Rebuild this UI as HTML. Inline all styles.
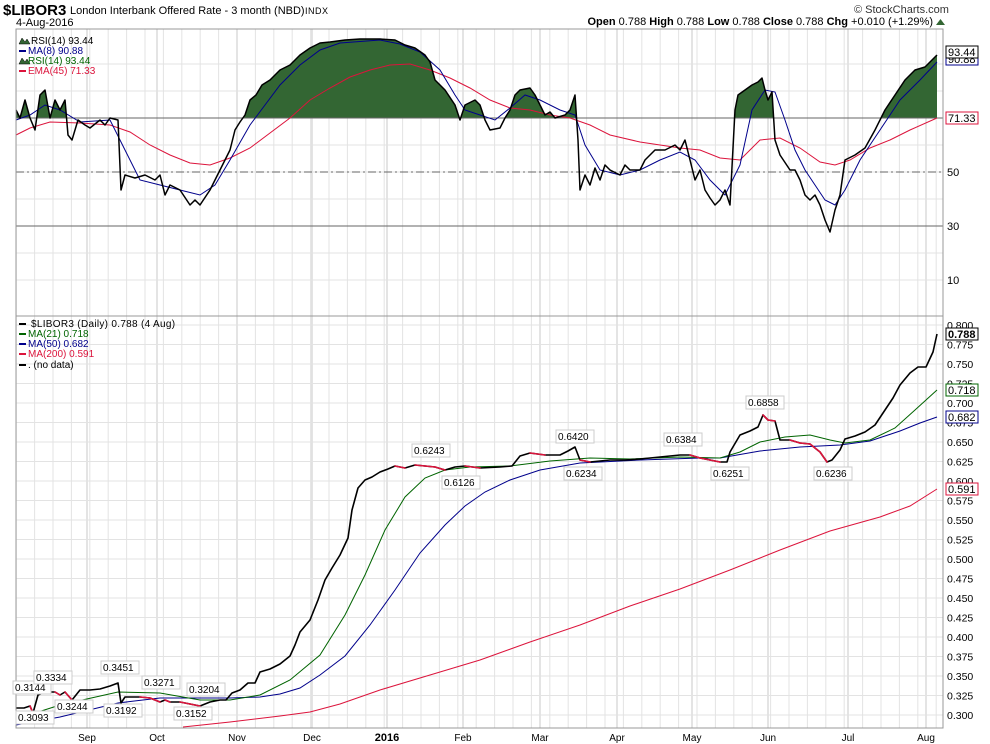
<!DOCTYPE html>
<html><head><meta charset="utf-8"><style>
html,body{margin:0;padding:0;background:#fff;width:990px;height:744px;overflow:hidden}
svg{display:block;font-family:"Liberation Sans",sans-serif}
.ax{font-size:11px;fill:#000}
</style></head><body>
<svg id="s" width="990" height="744" viewBox="0 0 990 744" xmlns="http://www.w3.org/2000/svg">
<defs>
<clipPath id="above"><rect x="16" y="29" width="927" height="89"/></clipPath>
<clipPath id="p2"><rect x="16" y="316" width="927" height="412"/></clipPath>
</defs>
<g id="grid"></g>
<text x="3" y="15" style="font-size:15px;font-weight:bold">$LIBOR3</text>
<text x="70" y="14" style="font-size:11px">London Interbank Offered Rate - 3 month (NBD)</text>
<text x="305" y="14" style="font-size:9px;letter-spacing:0.5px">INDX</text>
<text x="16" y="26" style="font-size:11px">4-Aug-2016</text>
<text x="854" y="13" style="font-size:11px;fill:#333">© StockCharts.com</text>
<text x="933" y="25" text-anchor="end" style="font-size:11px"><tspan font-weight="bold">Open</tspan> 0.788  <tspan font-weight="bold">High</tspan> 0.788  <tspan font-weight="bold">Low</tspan> 0.788  <tspan font-weight="bold">Close</tspan> 0.788  <tspan font-weight="bold">Chg</tspan> +0.010 (+1.29%)</text>
<polygon points="936,25 945,25 940.5,19" fill="#336633"/>
<g id="rsi"></g>
<g id="price"></g>
<rect x="16" y="29" width="927" height="699" fill="none" stroke="#999"/>
<line x1="16" y1="316" x2="943" y2="316" stroke="#999"/>
<g font-size="10">
<polygon points="19,44 22,38 25,42 27,39 30,44" fill="#336633" stroke="#000" stroke-width=".5"/>
<text x="31" y="44" fill="#000">RSI(14) 93.44</text>
<rect x="19" y="50" width="7" height="2" fill="#00008b"/><text x="28" y="54" fill="#00008b">MA(8) 90.88</text>
<polygon points="19,64 22,58 25,62 27,59 30,64" fill="#336633" stroke="#000" stroke-width=".5"/>
<text x="28" y="64" fill="#006400">RSI(14) 93.44</text>
<rect x="19" y="70" width="7" height="2" fill="#dc143c"/><text x="28" y="74" fill="#dc143c">EMA(45) 71.33</text>
<rect x="19" y="323" width="7" height="2" fill="#000"/><text x="31" y="327" fill="#000" style="letter-spacing:.3px">$LIBOR3 (Daily) 0.788 (4 Aug)</text>
<rect x="19" y="333" width="7" height="2" fill="#006400"/><text x="28" y="337" fill="#006400">MA(21) 0.718</text>
<rect x="19" y="343" width="7" height="2" fill="#00008b"/><text x="28" y="347" fill="#00008b">MA(50) 0.682</text>
<rect x="19" y="353" width="7" height="2" fill="#dc143c"/><text x="28" y="357" fill="#dc143c">MA(200) 0.591</text>
<rect x="19" y="364" width="7" height="2" fill="#000"/><text x="28" y="368" fill="#000">. (no data)</text>
</g>
<g id="axis"></g>
</svg>
<script>
const NS="http://www.w3.org/2000/svg";
function el(p,t,a,txt){const e=document.createElementNS(NS,t);for(const k in a)e.setAttribute(k,a[k]);if(txt!==undefined)e.textContent=txt;p.appendChild(e);return e;}
const G=document.getElementById('grid'),A=document.getElementById('axis'),R=document.getElementById('rsi'),P=document.getElementById('price');
const months=[[87,'Sep'],[157,'Oct'],[237,'Nov'],[312,'Dec'],[387,'2016'],[463,'Feb'],[540,'Mar'],[617,'Apr'],[692,'May'],[768,'Jun'],[848,'Jul'],[926,'Aug']];
for(let x=237-18.4*12;x<943;x+=18.4){if(x>16)el(G,'line',{x1:x,y1:29,x2:x,y2:728,stroke:'#e3e3e3'});}
months.forEach(([x,t])=>{el(G,'line',{x1:x,y1:29,x2:x,y2:728,stroke:'#c8c8c8'});
 el(A,'text',{x:x,y:741,'text-anchor':'middle','font-size':t=='2016'?'11':'10','font-weight':t=='2016'?'bold':'normal'},t);});
const ry=r=>118+(70-r)*2.7;
for(let r=10;r<=90;r+=10){el(G,'line',{x1:16,y1:ry(r),x2:943,y2:ry(r),stroke:'#e3e3e3'});}
[10,30,50].forEach(r=>el(A,'text',{x:947,y:ry(r)+4,'font-size':'11'},r));
const py=v=>325+(0.8-v)*780;
for(let i=0;i<=20;i++){const v=0.3+i*0.025,y=py(v);el(G,'line',{x1:16,y1:y,x2:943,y2:y,stroke:'#e3e3e3'});el(A,'text',{x:947,y:y+4,'font-size':'10.5'},v.toFixed(3));}
const rsi="16,110 20,118 25,100 30,118 35,130 40,95 45,90 50,118 55,100 60,110 65,100 68,135 72,140 78,120 85,125 90,128 100,120 105,125 110,118 118,120 121,190 125,175 135,178 145,175 155,180 160,175 165,195 170,185 180,190 190,205 195,200 200,205 210,190 215,180 225,160 230,150 235,130 240,122 245,115 250,100 256,95 262,85 270,80 280,70 290,65 300,55 310,48 320,43 330,42 345,40 360,39 380,39 395,40 405,45 415,48 425,55 430,62 435,80 445,90 455,105 460,120 465,105 475,100 480,105 485,120 490,130 500,128 505,118 510,110 515,95 520,90 530,88 535,95 540,105 545,115 550,112 555,118 565,115 570,110 575,95 578,140 580,190 585,175 590,185 595,168 600,180 605,165 610,170 620,175 625,165 630,170 640,170 645,160 650,155 655,150 665,150 675,145 680,150 685,140 690,160 695,180 700,170 705,190 710,198 715,205 720,200 725,190 730,205 735,110 738,95 745,90 752,85 758,82 762,78 765,90 768,100 772,92 775,140 780,155 790,170 795,170 800,180 805,195 810,200 815,195 820,205 825,220 830,232 835,210 840,195 845,160 855,155 865,148 875,130 885,110 895,95 905,80 915,70 925,67 937,55";
el(R,'polygon',{points:rsi+" 937,118 16,118",fill:'#336633','clip-path':'url(#above)'});
el(R,'line',{x1:16,y1:118,x2:943,y2:118,stroke:'#666'});
el(R,'line',{x1:16,y1:226,x2:943,y2:226,stroke:'#666'});
el(R,'line',{x1:16,y1:172,x2:943,y2:172,stroke:'#666','stroke-dasharray':'8,3,2,3'});
el(R,'polyline',{points:"16,135 30,128 50,122 80,123 110,125 130,132 150,145 170,155 190,163 210,165 230,158 250,148 270,133 290,118 310,100 330,88 350,77 370,70 390,65 410,64 430,70 450,78 470,88 490,100 510,108 530,110 550,115 570,118 590,125 610,135 640,142 660,145 680,148 700,150 720,158 740,160 760,140 780,138 800,148 820,162 835,165 850,160 870,148 890,140 910,130 937,118",fill:'none',stroke:'#dc143c'});
el(R,'polyline',{points:"16,120 30,115 45,105 60,110 80,122 110,120 125,150 140,180 160,185 180,190 200,195 215,185 230,160 250,125 265,105 280,85 300,65 320,50 340,43 380,40 400,44 420,52 440,70 455,95 465,110 480,115 495,120 510,108 525,95 540,100 560,110 575,115 585,145 600,170 620,175 640,170 660,160 680,152 695,160 710,180 725,195 740,165 752,110 765,90 775,92 785,120 795,150 805,170 815,185 825,200 835,205 845,190 860,160 880,130 900,100 920,80 937,62",fill:'none',stroke:'#00008b'});
el(R,'polyline',{points:rsi,fill:'none',stroke:'#000','stroke-width':1.5,'stroke-linejoin':'round'});
el(P,'polyline',{points:"183,727 230,722 280,716 310,712 340,704 380,690 430,675 480,660 530,642 580,625 630,606 680,589 730,570 780,550 830,531 880,517 910,506 937,489",fill:'none',stroke:'#dc143c','clip-path':'url(#p2)'});
el(P,'polyline',{points:"16,725 60,717 118,703 160,698 230,698 260,697 280,694 300,688 320,675 345,656 370,625 395,590 420,553 445,525 465,506 485,492 510,480 540,470 580,463 640,460 700,458 720,458 760,451 800,447 840,445 870,441 900,431 920,423 937,417",fill:'none',stroke:'#00008b'});
el(P,'polyline',{points:"35,713 60,705 118,692 160,693 200,700 230,700 260,695 290,680 320,655 345,615 365,575 385,530 405,497 425,478 445,470 470,467 510,466 550,461 590,458 630,459 680,457 720,458 740,452 760,442 785,437 810,435 830,440 845,443 870,440 895,428 915,410 937,390",fill:'none',stroke:'#006400'});
const pr="16,708 24,708 30,706 33,713 38,695 45,692 55,692 60,695 65,692 72,700 80,690 90,690 100,689 110,686 118,683 121,703 125,697 140,697 150,698 160,702 165,700 170,702 180,702 190,704 200,706 210,702 220,700 226,700 232,693 240,690 248,683 255,683 260,672 270,669 280,664 290,656 295,645 300,632 310,620 318,600 325,580 332,568 340,555 348,538 352,510 358,488 365,480 372,477 380,472 388,469 395,466 405,468 415,465 425,466 435,467 445,470 455,467 465,466 480,468 500,467 512,466 520,456 530,453 545,455 560,455 568,451 575,447 580,460 590,462 610,460 625,460 640,459 660,457 670,456 680,455 690,455 700,458 710,460 720,462 727,462 730,452 740,435 750,431 758,427 763,415 768,420 775,421 780,440 790,440 800,443 810,444 820,452 827,462 832,460 840,450 845,439 855,436 865,432 875,425 885,410 893,398 900,385 910,373 918,367 926,367 933,352 937,334";
el(P,'polyline',{points:pr,fill:'none',stroke:'#000','stroke-width':1.6,'stroke-linejoin':'round'});
const pts=pr.split(' ').map(s=>s.split(',').map(Number));
for(let i=1;i<pts.length;i++){const[a,b]=[pts[i-1],pts[i]];if(b[1]>a[1]&&b[1]-a[1]<12)el(P,'line',{x1:a[0],y1:a[1],x2:b[0],y2:b[1],stroke:'#dc143c','stroke-width':1.6,'stroke-linecap':'round'});}
function tag(x,y,t,c,b){el(A,'rect',{x:x,y:y-6,width:32,height:12,fill:'#fff',stroke:c});el(A,'text',{x:x+2,y:y+4,'font-size':'11',fill:'#000','font-weight':b?'bold':'normal'},t);}
tag(946,59,'90.88','#00008b');tag(946,52,'93.44','#000');tag(946,118,'71.33','#dc143c');
tag(946,334,'0.788','#000',1);tag(946,390,'0.718','#006400');tag(946,417,'0.682','#00008b');tag(946,489,'0.591','#dc143c');
[[15,690,'0.3144'],[36,680,'0.3334'],[103,670,'0.3451'],[144,685,'0.3271'],[189,692,'0.3204'],[18,720,'0.3093'],[57,709,'0.3244'],[106,713,'0.3192'],[176,716,'0.3152'],
[414,453,'0.6243'],[444,485,'0.6126'],[558,439,'0.6420'],[566,476,'0.6234'],[666,442,'0.6384'],[713,476,'0.6251'],[748,405,'0.6858'],[816,476,'0.6236']].forEach(([x,y,t])=>{
el(A,'rect',{x:x-2,y:y-9,width:38,height:13,fill:'#fff',stroke:'#ccc'});el(A,'text',{x:x,y:y+1,'font-size':'10'},t);});
</script>
</body></html>
